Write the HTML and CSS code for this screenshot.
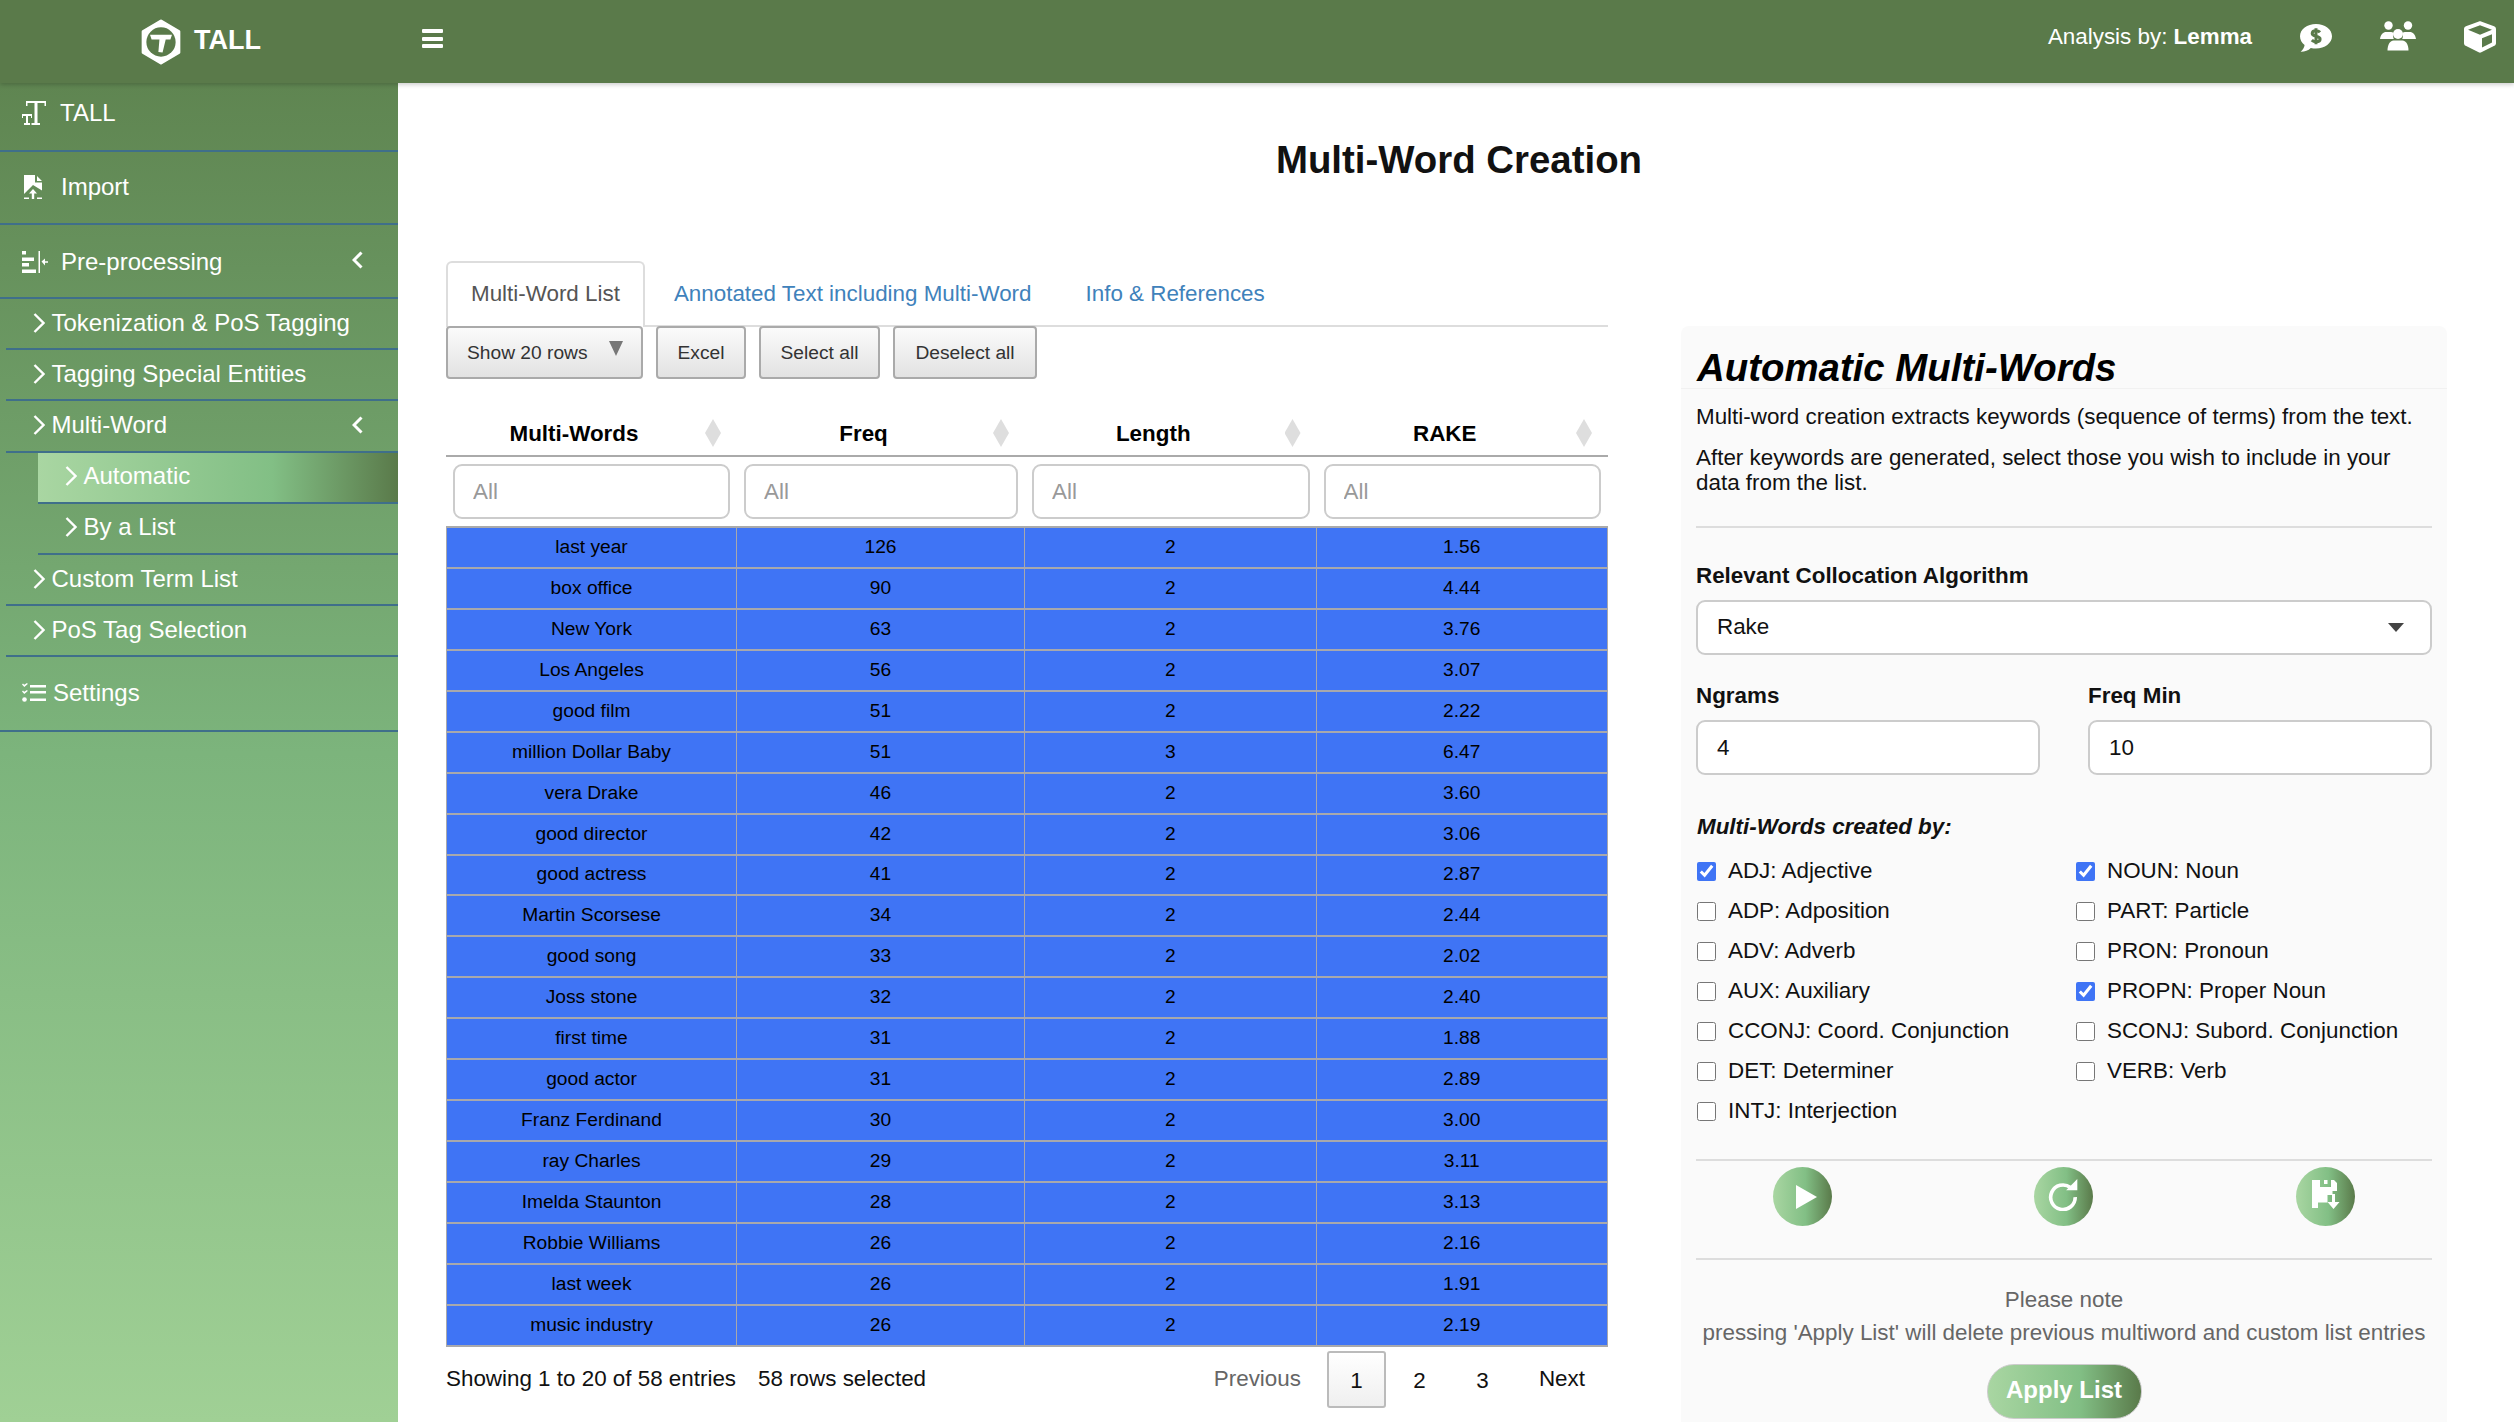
FILE: index.html
```html
<!DOCTYPE html>
<html lang="en">
<head>
<meta charset="utf-8">
<title>TALL - Multi-Word Creation</title>
<link rel="stylesheet" href="styles.css">
</head>
<body>
<header class="topbar">
  <div class="brand">
    <svg class="logo" viewBox="0 0 40 44"><path class="logo-hex" d="M20 2 37 12V32L20 42 3 32V12Z"/><circle class="logo-ring" cx="20" cy="22" r="14"/><path class="logo-t" d="M9.500 15H30.500L29 19.500H24.500L21.500 32 17.500 31.500 18.500 19.500H11Z"/></svg>
    <span class="brand-name">TALL</span>
  </div>
  <button class="burger" aria-label="Menu"><i></i><i></i><i></i></button>
  <div class="topbar-right">
    <span class="analysis">Analysis by: <b>Lemma</b></span>
    <svg class="top-icon i-comment" viewBox="0 0 32 28"><path class="fill-white" d="M16 0C7.200 0 0 5.200 0 12.200 0 15.800 1.800 18.800 4.600 21 4.300 23.500 3 25.700.6 27.700 4.600 27.800 8.200 26.500 10.800 23.900 12.500 24.300 14.200 24.500 16 24.500 24.800 24.500 32 18.900 32 12.200 32 5.200 24.800 0 16 0Z"/><path class="dollar" d="M20 8.300C19 7.200 17.600 6.800 15.800 6.800 13.500 6.800 12.200 8 12.200 9.600 12.200 13.200 20.100 11.200 20.100 15 20.100 16.700 18.600 17.800 16.200 17.800 14.300 17.800 12.900 17.200 11.800 16.100M16 4.300V20.300"/></svg>
    <svg class="top-icon i-users" viewBox="0 0 36 30"><circle cx="8.500" cy="4.500" r="4.200"/><circle cx="28" cy="4.500" r="4.200"/><circle cx="18" cy="13" r="5"/><path d="M0 18C.5 13.500 3.500 11 6 11H11C12 11 12.800 11.400 13.500 12 12.500 13.800 13 16 13.800 18Z"/><path d="M36 18C35.500 13.500 32.500 11 30 11H25C24 11 23.200 11.400 22.500 12 23.500 13.800 23 16 22.200 18Z"/><path d="M7.500 29.500C7.500 23 10.500 19.500 13.500 19.500H22.500C25.500 19.500 28.500 23 28.500 29.500Z"/></svg>
    <svg class="top-icon i-cube" viewBox="0 0 512 512"><path d="M239.100 6.300l-208 78c-18.700 7-31.100 25-31.100 45v225.100c0 18.200 10.300 34.800 26.500 42.900l208 104c13.500 6.800 29.400 6.800 42.900 0l208-104c16.300-8.100 26.500-24.800 26.500-42.900V129.300c0-20-12.400-37.900-31.100-44.900l-208-78C262 2.200 250 2.200 239.100 6.300zM256 68.400l192 72v1.100l-192 78-192-78v-1.100l192-72zm32 356V275.500l160-65v133.900l-160 80z"/></svg>
  </div>
</header>
<div class="shell">
  <nav class="sidebar">
    <a class="nav-row row-tall"><svg class="nav-icon ic-tall" viewBox="0 0 24 24"><path d="M4 0H24V5H22.500V2H15.500V22H18V24H9.500V22H12.500V2H5.500V5H4ZM0 13H10V17H9V15H6V22H8V24H2V22H4V15H1V17H0Z"/></svg><span class="nav-label lab-tall">TALL</span></a>
    <a class="nav-row row-import"><svg class="nav-icon ic-import" viewBox="0 0 18 24"><path d="M0 0H11V7.500H18V15.500L9 10 0 19ZM13 1 18 6H13ZM0 22.500H5V24H0ZM13 22.500H18V24H13ZM9 14 13 18.500H10.200V24H7.800V18.500H5Z"/></svg><span class="nav-label lab-import">Import</span></a>
    <a class="nav-row row-pre"><svg class="nav-icon ic-pre" viewBox="0 0 26 22"><path d="M0 0H4V3.500H0ZM0 6.500H12V10H0ZM0 12H7V15.500H0ZM0 18.500H14V22H0ZM16.500 0H18V22H16.500ZM19.500 10.500 23 7.500V10.300H26V11.700H23V14.500Z"/></svg><span class="nav-label">Pre-processing</span><svg class="caret-left" viewBox="0 0 11 18"><path d="M9.500 1.500 2 9 9.500 16.500"/></svg></a>
    <a class="nav-row sub"><svg class="chev" viewBox="0 0 12 20"><path d="M1.500 1 10.500 10 1.500 19"/></svg><span class="nav-label">Tokenization &amp; PoS Tagging</span></a>
    <a class="nav-row sub"><svg class="chev" viewBox="0 0 12 20"><path d="M1.500 1 10.500 10 1.500 19"/></svg><span class="nav-label">Tagging Special Entities</span></a>
    <a class="nav-row sub"><svg class="chev" viewBox="0 0 12 20"><path d="M1.500 1 10.500 10 1.500 19"/></svg><span class="nav-label">Multi-Word</span><svg class="caret-left" viewBox="0 0 11 18"><path d="M9.500 1.500 2 9 9.500 16.500"/></svg></a>
    <a class="nav-row subsub active"><svg class="chev" viewBox="0 0 12 20"><path d="M1.500 1 10.500 10 1.500 19"/></svg><span class="nav-label">Automatic</span></a>
    <a class="nav-row subsub"><svg class="chev" viewBox="0 0 12 20"><path d="M1.500 1 10.500 10 1.500 19"/></svg><span class="nav-label">By a List</span></a>
    <a class="nav-row sub"><svg class="chev" viewBox="0 0 12 20"><path d="M1.500 1 10.500 10 1.500 19"/></svg><span class="nav-label">Custom Term List</span></a>
    <a class="nav-row sub"><svg class="chev" viewBox="0 0 12 20"><path d="M1.500 1 10.500 10 1.500 19"/></svg><span class="nav-label">PoS Tag Selection</span></a>
    <a class="nav-row row-settings"><svg class="nav-icon ic-settings" viewBox="0 0 24 19"><path d="M8 2H24V4.500H8ZM8 8H24V10.500H8ZM8 15.500H24V18H8ZM0 1.500 1 .500 2.200 1.800 5 0 5.800 1 2.300 4ZM0 8.500 1 7.500 2.200 8.800 5 7 5.800 8 2.300 11Z"/><circle cx="2.500" cy="16.500" r="2.300"/></svg><span class="nav-label">Settings</span></a>
  </nav>
  <main class="main">
    <h1 class="page-title">Multi-Word Creation</h1>
    <div class="columns">
      <section class="left">
        <div class="tabs">
          <a class="tab tab-active">Multi-Word List</a>
          <a class="tab">Annotated Text including Multi-Word</a>
          <a class="tab">Info &amp; References</a>
        </div>
        <div class="tools">
          <button class="btn btn-show">Show 20 rows<i class="btn-caret"></i></button>
          <button class="btn btn-excel">Excel</button>
          <button class="btn btn-sel">Select all</button>
          <button class="btn btn-desel">Deselect all</button>
        </div>
        <table class="grid">
          <colgroup><col class="c1"><col class="c2"><col class="c3"><col class="c4"></colgroup>
          <thead>
            <tr class="head-row">
              <th>Multi-Words<i class="sort"></i></th>
              <th>Freq<i class="sort"></i></th>
              <th>Length<i class="sort"></i></th>
              <th>RAKE<i class="sort"></i></th>
            </tr>
            <tr class="filter-row">
              <td><input class="filter" placeholder="All"></td>
              <td><input class="filter" placeholder="All"></td>
              <td><input class="filter" placeholder="All"></td>
              <td><input class="filter" placeholder="All"></td>
            </tr>
          </thead>
          <tbody>
            <tr><td>last year</td><td>126</td><td>2</td><td>1.56</td></tr>
            <tr><td>box office</td><td>90</td><td>2</td><td>4.44</td></tr>
            <tr><td>New York</td><td>63</td><td>2</td><td>3.76</td></tr>
            <tr><td>Los Angeles</td><td>56</td><td>2</td><td>3.07</td></tr>
            <tr><td>good film</td><td>51</td><td>2</td><td>2.22</td></tr>
            <tr><td>million Dollar Baby</td><td>51</td><td>3</td><td>6.47</td></tr>
            <tr><td>vera Drake</td><td>46</td><td>2</td><td>3.60</td></tr>
            <tr><td>good director</td><td>42</td><td>2</td><td>3.06</td></tr>
            <tr><td>good actress</td><td>41</td><td>2</td><td>2.87</td></tr>
            <tr><td>Martin Scorsese</td><td>34</td><td>2</td><td>2.44</td></tr>
            <tr><td>good song</td><td>33</td><td>2</td><td>2.02</td></tr>
            <tr><td>Joss stone</td><td>32</td><td>2</td><td>2.40</td></tr>
            <tr><td>first time</td><td>31</td><td>2</td><td>1.88</td></tr>
            <tr><td>good actor</td><td>31</td><td>2</td><td>2.89</td></tr>
            <tr><td>Franz Ferdinand</td><td>30</td><td>2</td><td>3.00</td></tr>
            <tr><td>ray Charles</td><td>29</td><td>2</td><td>3.11</td></tr>
            <tr><td>Imelda Staunton</td><td>28</td><td>2</td><td>3.13</td></tr>
            <tr><td>Robbie Williams</td><td>26</td><td>2</td><td>2.16</td></tr>
            <tr><td>last week</td><td>26</td><td>2</td><td>1.91</td></tr>
            <tr><td>music industry</td><td>26</td><td>2</td><td>2.19</td></tr>
          </tbody>
        </table>
        <div class="table-foot">
          <div class="info"><span>Showing 1 to 20 of 58 entries</span><span class="selected">58 rows selected</span></div>
          <div class="pager">
            <a class="pg pg-prev">Previous</a>
            <a class="pg pg-num pg-current">1</a>
            <a class="pg pg-num">2</a>
            <a class="pg pg-num">3</a>
            <a class="pg pg-next">Next</a>
          </div>
        </div>
      </section>
      <aside class="panel">
        <h2 class="panel-title">Automatic Multi-Words</h2>
        <div class="panel-body">
          <p class="para p1">Multi-word creation extracts keywords (sequence of terms) from the text.</p>
          <p class="para p2">After keywords are generated, select those you wish to include in your data from the list.</p>
          <hr class="rule r1">
          <label class="field-label">Relevant Collocation Algorithm</label>
          <div class="select-wrap"><div class="select-box">Rake</div><i class="select-caret"></i></div>
          <div class="two">
            <div class="two-col"><label class="field-label">Ngrams</label><input class="num" value="4"></div>
            <div class="two-col"><label class="field-label">Freq Min</label><input class="num" value="10"></div>
          </div>
          <div class="legend">Multi-Words created by:</div>
          <div class="checks">
            <label class="chk"><input type="checkbox" checked>ADJ: Adjective</label>
            <label class="chk"><input type="checkbox" checked>NOUN: Noun</label>
            <label class="chk"><input type="checkbox">ADP: Adposition</label>
            <label class="chk"><input type="checkbox">PART: Particle</label>
            <label class="chk"><input type="checkbox">ADV: Adverb</label>
            <label class="chk"><input type="checkbox">PRON: Pronoun</label>
            <label class="chk"><input type="checkbox">AUX: Auxiliary</label>
            <label class="chk"><input type="checkbox" checked>PROPN: Proper Noun</label>
            <label class="chk"><input type="checkbox">CCONJ: Coord. Conjunction</label>
            <label class="chk"><input type="checkbox">SCONJ: Subord. Conjunction</label>
            <label class="chk"><input type="checkbox">DET: Determiner</label>
            <label class="chk"><input type="checkbox">VERB: Verb</label>
            <label class="chk"><input type="checkbox">INTJ: Interjection</label>
          </div>
          <hr class="rule r2">
          <div class="actions">
            <button class="round" aria-label="Run"><svg class="ic-play" viewBox="0 0 21 24"><path d="M0 0 21 12 0 24Z"/></svg></button>
            <button class="round" aria-label="Reset"><svg class="ic-redo" viewBox="0 0 30 30"><path class="redo-arc" d="M21 8A11.500 11.500 0 1 0 25.500 17"/><path class="redo-head" d="M17 10.500 27.500 10.500 27.500 0Z"/></svg></button>
            <button class="round" aria-label="Save"><svg class="ic-save" viewBox="0 0 28 29"><path d="M0 0H22L25 3V11H20.500V15H15.500V22.500H6V28H0ZM8 0V7H19V0H15.500V4H12V0Z" fill-rule="evenodd"/><path d="M20 14H23V22H27.500L21.500 29 15.500 22H20Z"/></svg></button>
          </div>
          <hr class="rule r3">
          <p class="note note-a">Please note</p>
          <p class="note note-b">pressing 'Apply List' will delete previous multiword and custom list entries</p>
          <div class="apply-row"><button class="apply">Apply List</button></div>
        </div>
      </aside>
    </div>
  </main>
</div>
</body>
</html>
```
FILE: styles.css
```css
* { box-sizing: border-box; }
html, body { margin: 0; height: 1422px; overflow: hidden; }
body { font-family: "Liberation Sans", Arial, sans-serif; font-size: 22.400px; color: #111; background: #fff; display: flex; flex-direction: column; }

/* top bar */
.topbar { height: 83px; flex: none; background: #5a7a4a; display: flex; align-items: center; color: #fff; position: relative; z-index: 2; box-shadow: 0 2px 4px rgba(0,0,0,.18); }
.brand { width: 398px; flex: none; display: flex; align-items: center; padding-left: 140px; }
.logo { width: 42px; height: 46px; }
.logo-hex { fill: #fff; stroke: #fff; stroke-width: 3; stroke-linejoin: round; }
.logo-ring { fill: #5a7a4a; }
.logo-t { fill: #fff; }
.brand-name { font-weight: 700; font-size: 27px; margin-left: 12px; margin-top: -2px; }
.burger { width: 21px; height: 19px; margin: -6px 0 0 24px; padding: 0; background: none; border: 0; display: flex; flex-direction: column; justify-content: space-between; }
.burger i { display: block; height: 4px; background: #fff; border-radius: 1px; }
.topbar-right { margin-left: auto; display: flex; align-items: center; height: 74px; margin-top: -9px; }
.analysis { font-size: 22.400px; margin-right: 48px; }
.top-icon { fill: #fff; display: block; }
.i-comment { width: 32px; height: 28px; margin-right: 48px; margin-top: 1px; }
.fill-white { fill: #fff; }
.dollar { fill: none; stroke: #5a7a4a; stroke-width: 3; }
.i-users { width: 36px; height: 30px; margin-right: 48px; margin-top: -2px; }
.i-cube { width: 32px; height: 32px; margin-right: 18px; }

/* layout */
.shell { display: flex; flex: 1; min-height: 0; }

/* sidebar */
.sidebar { width: 398px; flex: none; background: linear-gradient(180deg, #5f8551 0%, #7cb47c 50%, #a0d095 100%); color: #fff; font-size: 24px; }
.nav-row { display: flex; align-items: center; border-bottom: 2px solid #3f6f8a; position: relative; }
.row-tall { height: 69px; padding: 0 0 7px 22px; }
.row-import { height: 73px; padding: 0 0 1px 24px; }
.row-pre { height: 74px; padding: 1px 0 0 22px; }
.sub { height: 51.200px; margin-left: 6px; padding-left: 27px; padding-bottom: 1px; }
.subsub { height: 51px; margin-left: 38px; padding-left: 27px; padding-bottom: 2px; }
.row-settings { height: 75px; padding: 0 0 1px 22px; }
.active { background: linear-gradient(90deg, #a9d6a2 0%, #82bf85 65%, #5a7a4a 100%); }
.nav-icon { fill: #fff; flex: none; display: block; }
.ic-tall { width: 24px; height: 24px; }
.ic-import { width: 18px; height: 24px; }
.ic-pre { width: 26px; height: 22px; }
.ic-settings { width: 24px; height: 19px; }
.lab-tall { margin-left: 14px; }
.lab-import { margin-left: 19px; }
.row-pre .nav-label { margin-left: 13px; }
.row-settings .nav-label { margin-left: 7px; }
.chev { width: 12px; height: 20px; flex: none; margin-right: 6.500px; fill: none; stroke: #fff; stroke-width: 2.400; }
.caret-left { position: absolute; left: 352px; top: 50%; width: 11px; height: 18px; margin-top: -10px; fill: none; stroke: #fff; stroke-width: 3; }
.sub .caret-left { left: 346px; }

/* main */
.main { flex: 1; min-width: 0; padding-left: 48px; }
.page-title { font-size: 38.400px; line-height: 44px; font-weight: 700; margin: 55px 0 79px -48px; text-align: center; padding-left: 6px; color: #111; }
.columns { display: flex; align-items: flex-start; }
.left { width: 1162px; flex: none; }

/* tabs */
.tabs { display: flex; height: 66px; border-bottom: 2px solid #ddd; }
.tab { height: 66px; padding: 0 23px; margin-right: 4px; line-height: 62px; color: #3f82bb; border: 2px solid transparent; border-bottom: 0; }
.tab-active { color: #555; background: #fff; border-color: #ddd; border-radius: 6px 6px 0 0; }
.tools { display: flex; gap: 21px; height: 80px; align-items: flex-start; margin-top: -1px; }
.btn { height: 53px; font: inherit; font-size: 19.200px; color: #333; border: 2px solid #aaa; border-radius: 4px; background: linear-gradient(180deg, #fbfbfb 0%, #e2e2e2 100%); padding: 0; }
.btn-show { width: 197px; text-align: left; padding-left: 19px; position: relative; }
.btn-excel { width: 90px; margin-left: -8px; }
.btn-sel { width: 121px; margin-left: -8px; }
.btn-desel { width: 144px; margin-left: -8px; }
.btn-caret { position: absolute; left: 161px; top: 13px; border: solid transparent; border-width: 15px 7px 0; border-top-color: #777; }

/* table */
.grid { width: 1162px; table-layout: fixed; border-collapse: separate; border-spacing: 0; }
.c1 { width: 291px; }
.c2 { width: 288px; }
.c3 { width: 291.500px; }
.c4 { width: 291.500px; }
.head-row th { height: 51px; padding: 6px 35px 0 0; font-size: 22.400px; font-weight: 700; color: #000; text-align: center; border-bottom: 2px solid #aaa; position: relative; }
.sort { position: absolute; right: 16px; top: 13px; width: 16px; height: 28px; background: #dedede; clip-path: polygon(50% 0, 100% 50%, 50% 100%, 0 50%); }
.filter-row td { height: 69px; padding: 7px; vertical-align: top; border-bottom: 2px solid #aaa; }
.filter { width: 100%; height: 55px; border: 2px solid #ccc; border-radius: 9px; padding: 0 18px; font: inherit; outline: 0; background: #fff; }
.filter::placeholder { color: #999; opacity: 1; }
tbody tr { height: 40.950px; background: #3f74f5; }
tbody td { padding: 0 0 1px; text-align: center; font-size: 19.200px; color: #000; border-bottom: 2px solid #a8a8ac; border-right: 1.500px solid #a8a8ac; }
tbody td:first-child { border-left: 1.500px solid #a8a8ac; }
.table-foot { display: flex; justify-content: space-between; height: 66px; padding-top: 4px; }
.info { display: flex; gap: 22px; align-items: center; height: 57px; color: #111; }
.pager { display: flex; align-items: center; height: 57px; padding-right: 23px; }
.pg { color: #111; text-align: center; }
.pg-prev { color: #666; margin-right: 26px; }
.pg-num { width: 59px; height: 57px; line-height: 55px; margin-right: 4px; border: 2px solid transparent; border-radius: 3px; }
.pg-current { background: linear-gradient(180deg, #fff 0%, #efefef 100%); border-color: #bbb; }
.pg-next { margin-left: 23px; }

/* panel */
.panel { width: 766px; margin: 65px 0 0 73px; background: #fafafa; border-radius: 8px 8px 0 0; height: 1100px; flex: none; }
.panel-title { margin: 0; height: 63px; line-height: 83px; padding-left: 16px; font-size: 38.400px; font-style: italic; font-weight: 700; color: #000; border-bottom: 1px solid #f1f1f1; }
.panel-body { padding: 15px 15px 0; }
.para { margin: 0; line-height: 25px; color: #111; }
.p1 { margin-bottom: 16px; }
.rule { margin: 0; border: 0; border-top: 2px solid #ddd; }
.r1 { margin-top: 31px; }
.field-label { display: block; font-weight: 700; line-height: 25px; color: #111; }
.r1 + .field-label { margin-top: 35px; }
.select-wrap { position: relative; margin-top: 12px; }
.select-box { height: 55px; line-height: 50px; background: #fff; border: 2px solid #ccc; border-radius: 9px; padding-left: 19px; }
.select-caret { position: absolute; left: 692px; top: 23px; border: solid transparent; border-width: 9px 8px 0; border-top-color: #444; }
.two { display: flex; justify-content: space-between; margin-top: 28px; }
.two-col { width: 344px; }
.num { display: block; width: 100%; height: 55px; margin-top: 12px; border: 2px solid #ccc; border-radius: 9px; padding: 0 19px; font: inherit; background: #fff; outline: 0; color: #111; }
.legend { font-weight: 700; font-style: italic; line-height: 25px; margin-top: 39px; color: #111; padding-left: 1px; }
.checks { display: grid; grid-template-columns: 379px 1fr; grid-auto-rows: 40px; margin-top: 12px; }
.chk { display: flex; align-items: center; color: #111; }
.chk input { width: 19px; height: 19px; margin: 1px 12px 0 1px; accent-color: #3f74f5; flex: none; }
.r2 { margin-top: 28px; }
.actions { height: 97px; display: flex; align-items: flex-start; padding-top: 6px; }
.round { width: 59px; height: 59px; border-radius: 50%; border: 0; padding: 0; background: linear-gradient(90deg, #a9d6a2 0%, #82bf85 55%, #5a7a4a 100%); display: flex; align-items: center; justify-content: center; flex: none; }
.round:nth-child(1) { margin-left: 77px; }
.round:nth-child(2) { margin-left: 202px; }
.round:nth-child(3) { margin-left: 203px; }
.ic-play { width: 21px; height: 24px; fill: #fff; margin-left: 7px; }
.ic-redo { width: 32px; height: 32px; margin-top: -3px; }
.redo-arc { fill: none; stroke: #fff; stroke-width: 3.400; }
.redo-head { fill: #fff; }
.ic-save { width: 28px; height: 29px; fill: #fff; margin-top: -4px; }
.note { margin: 0; text-align: center; color: #666; line-height: 33px; }
.note-a { margin-top: 23px; }
.apply-row { display: flex; justify-content: center; margin-top: 15px; }
.apply { width: 155px; height: 55px; border-radius: 27px; border: 1px solid #ccc; background: linear-gradient(90deg, #a9d6a2 0%, #82bf85 60%, #5a7a4a 100%); color: #fff; font: inherit; font-size: 24px; font-weight: 700; padding: 0 0 3px; }
```
